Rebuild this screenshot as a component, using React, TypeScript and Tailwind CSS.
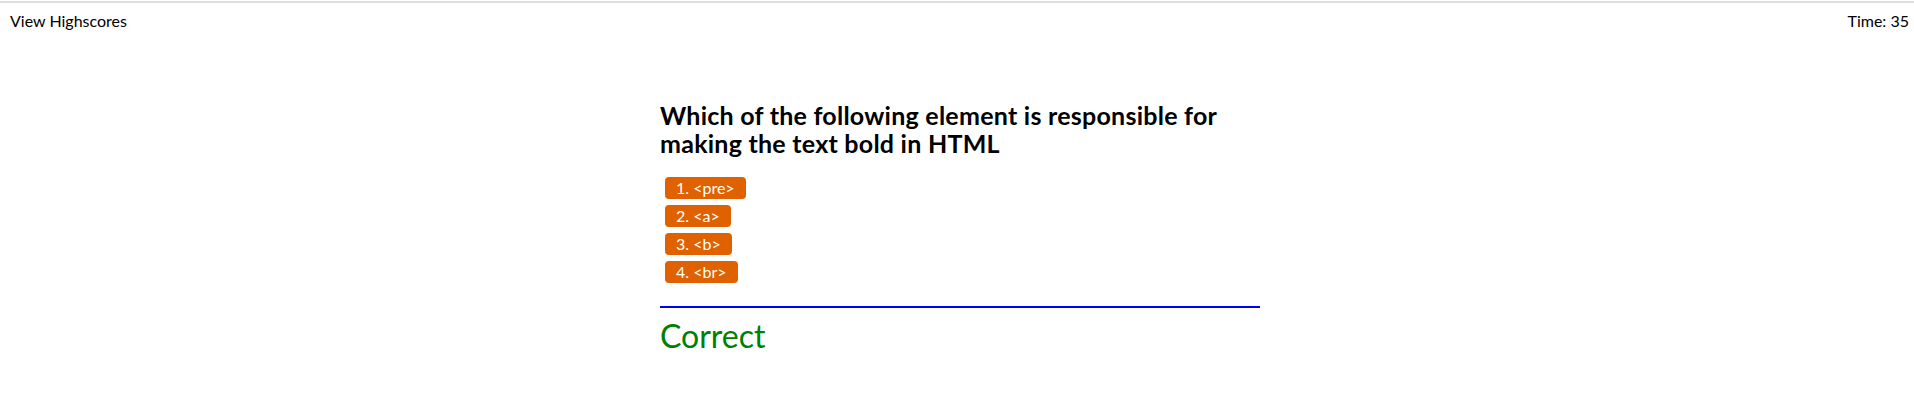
import React from "react";

const answers = ["1. <pre>", "2. <a>", "3. <b>", "4. <br>"];

const App = () => {
  return (
    <div
      className="w-full min-h-screen bg-white text-black"
      style={{ fontFamily: "'Trebuchet MS', Lato, 'Noto Sans', sans-serif" }}
    >
      <div className="mt-px h-[2px] bg-[#dedede]" />
      <header className="flex justify-between pl-[10px] pr-[5px] pt-[8px] text-[16px] leading-[20px]">
        <span>View Highscores</span>
        <span>Time: 35</span>
      </header>
      <main className="mx-auto w-[606px] pl-[6px] pt-[70px]">
        <h1 className="text-[25px] font-bold leading-[28px] tracking-[0.25px]">
          Which of the following element is responsible for
          <br />
          making the text bold in HTML
        </h1>
        <ol className="mt-[20px] flex flex-col items-start gap-[6px] pl-[5px]">
          {answers.map((answer) => (
            <li key={answer} className="flex h-[22px]">
              <button className="h-[22px] rounded-[4px] bg-[#df6100] px-[11px] text-[16px] leading-[22px] text-white">
                {answer}
              </button>
            </li>
          ))}
        </ol>
        <div className="mt-[23px] h-[2px] bg-[#0000ff]" />
        <p className="pt-[9px] text-[32px] leading-[38px] text-[#008000]">
          Correct
        </p>
      </main>
    </div>
  );
};

export default App;
